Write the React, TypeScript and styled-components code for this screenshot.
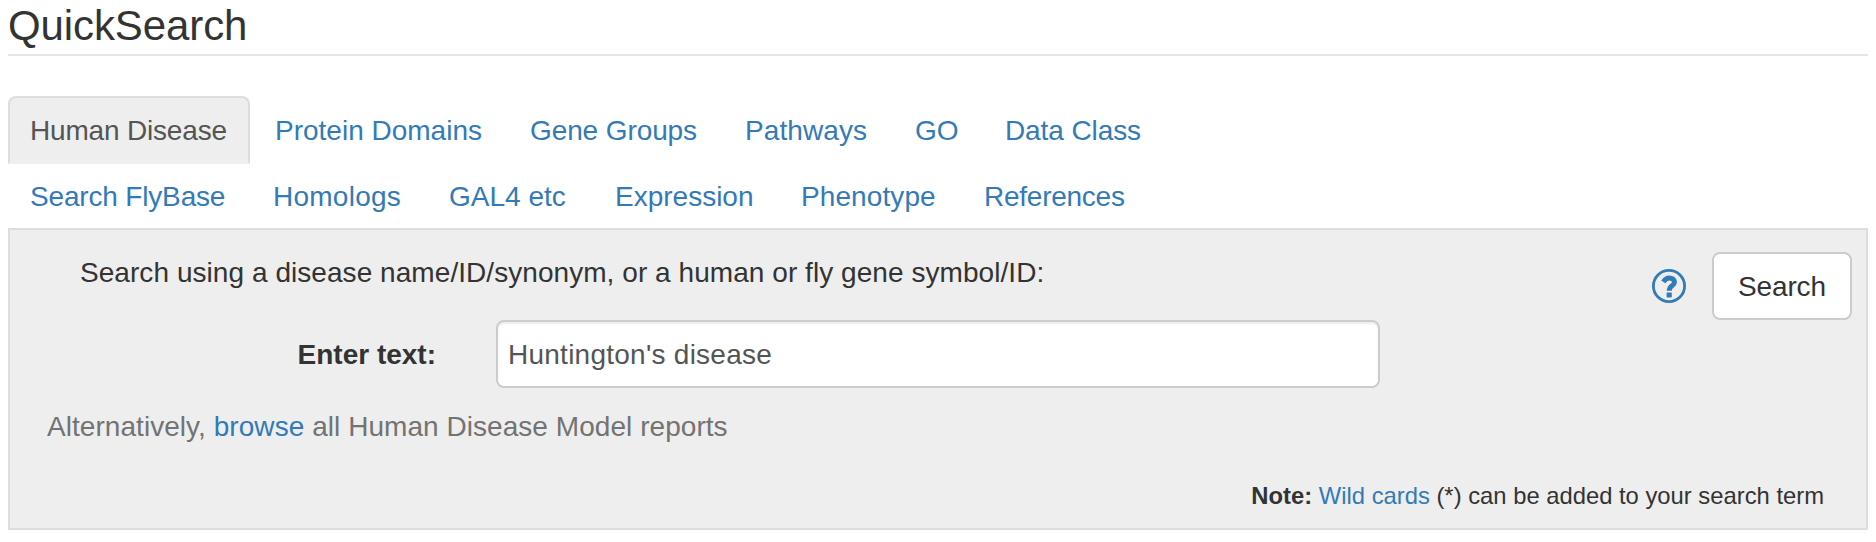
import React, { useState } from "react";
import styled, { createGlobalStyle } from "styled-components";

const GlobalStyle = createGlobalStyle`
  * { box-sizing: border-box; }
  body {
    margin: 0;
    background: #fff;
    color: #333;
    font: 28px/40px "Liberation Sans", sans-serif;
    overflow: hidden;
  }
`;

const Page = styled.main`
  padding: 0 8px;
`;

const Title = styled.h1`
  margin: 0;
  height: 56px;
  padding-top: 2px;
  border-bottom: 2px solid #e5e5e5;
  font-size: 42px;
  font-weight: 400;
  line-height: 48px;
`;

const Tabs = styled.nav`
  margin-top: 40px;
`;

const TabRow = styled.div`
  display: flex;
  gap: 3px;
  height: 66px;
`;

const Spacing = styled.span<{ $track?: number }>`
  letter-spacing: ${(p) => p.$track ?? 0}px;
  white-space: pre;
`;

const Tab = styled.a<{ $active?: boolean; $width: number }>`
  width: ${(p) => p.$width}px;
  height: 68px;
  padding: 13px 20px 11px;
  border: 2px solid ${(p) => (p.$active ? "#ddd" : "transparent")};
  border-bottom-color: transparent;
  border-radius: 8px 8px 0 0;
  background: ${(p) => (p.$active ? "#eee" : "transparent")};
  color: ${(p) => (p.$active ? "#555" : "#337ab7")};
  white-space: nowrap;
  cursor: pointer;
`;

const Panel = styled.section`
  display: flex;
  flex-direction: column;
  height: 302px;
  border: 2px solid #ddd;
  background: #eee;
`;

const Top = styled.div`
  display: flex;
  justify-content: space-between;
  height: 90px;
  padding: 22px 14px 0 70px;
`;

const Prompt = styled.p`
  margin: 1px 0 0;
`;

const Actions = styled.div`
  display: flex;
  align-items: center;
  gap: 26px;
  height: 68px;
`;

const SearchButton = styled.button`
  width: 140px;
  height: 68px;
  padding: 2px 0 0;
  border: 2px solid #ccc;
  border-radius: 8px;
  background: #fff;
  color: #333;
  font: inherit;
  letter-spacing: -0.15px;
`;

const Field = styled.label`
  display: flex;
  align-items: center;
  height: 68px;
`;

const FieldName = styled.span`
  width: 426px;
  margin-right: 60px;
  padding-top: 2px;
  text-align: right;
  font-weight: 700;
`;

const TextInput = styled.input`
  width: 884px;
  height: 68px;
  padding: 2px 10px 0;
  border: 2px solid #ccc;
  border-radius: 8px;
  background: #fff;
  box-shadow: inset 0 2px 2px rgba(0, 0, 0, 0.075);
  color: #555;
  font: inherit;
  letter-spacing: 0.25px;
  outline: none;
`;

const Help = styled.p`
  margin: 19px 0 0 37px;
  color: #737373;
`;

const Link = styled.a`
  color: #337ab7;
  cursor: pointer;
`;

const Note = styled.p`
  margin: 32px 42px 0 0;
  font-size: 23.8px;
  line-height: 34px;
  text-align: right;
`;

const rows = [
  [
    ["Human Disease", 242, -0.18],
    ["Protein Domains", 252, 0],
    ["Gene Groups", 212, -0.1],
    ["Pathways", 167, 0.1],
    ["GO", 87, 0],
    ["Data Class", 180, -0.1],
  ],
  [
    ["Search FlyBase", 240, -0.17],
    ["Homologs", 173, 0.25],
    ["GAL4 etc", 163, 0],
    ["Expression", 183, 0],
    ["Phenotype", 180, 0.1],
    ["References", 186, -0.25],
  ],
] as [string, number, number][][];

const QuestionIcon = () => (
  <svg width="34" height="34" viewBox="0 0 34 34" fill="none" aria-label="Help">
    <circle cx="17" cy="17" r="15.6" stroke="#337ab7" strokeWidth="2.8" />
    <path
      d="M11.3 12.9C13.2 10.1 14.6 8.900 17.200 8.900c2.900 0 5.300 1.700 5.300 4.100 0 3.700-5.300 3.700-5.300 8.700"
      stroke="#337ab7"
      strokeWidth="5"
    />
    <rect x="14.600" y="23.400" width="5.200" height="5" rx=".7" fill="#337ab7" />
  </svg>
);

export default function App() {
  const [active, setActive] = useState("Human Disease");
  const [query, setQuery] = useState("Huntington's disease");
  return (
    <Page>
      <GlobalStyle />
      <Title><Spacing $track={-0.1}>QuickSearch</Spacing></Title>
      <Tabs>
        {rows.map((row, i) => (
          <TabRow key={i}>
            {row.map(([name, width, track]) => (
              <Tab key={name} $width={width} $active={name === active} onClick={() => setActive(name)}>
                <Spacing $track={track}>{name}</Spacing>
              </Tab>
            ))}
          </TabRow>
        ))}
      </Tabs>
      <Panel>
        <Top>
          <Prompt>
            <Spacing $track={0.055}>Search using a disease name/ID/synonym, or a human or fly gene symbol/ID:</Spacing>
          </Prompt>
          <Actions>
            <QuestionIcon />
            <SearchButton>Search</SearchButton>
          </Actions>
        </Top>
        <Field>
          <FieldName>Enter text:</FieldName>
          <TextInput value={query} onChange={(e) => setQuery(e.target.value)} />
        </Field>
        <Help>
          <Spacing $track={0.05}>Alternatively, <Link>browse</Link> all Human Disease Model reports</Spacing>
        </Help>
        <Note>
          <Spacing><b>Note:</b> <Link>Wild cards</Link> (*) can be added to your search term</Spacing>
        </Note>
      </Panel>
    </Page>
  );
}
